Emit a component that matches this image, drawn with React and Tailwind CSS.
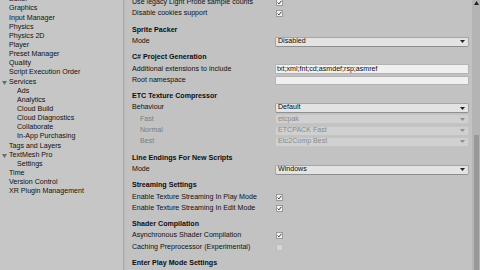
import React from 'react';

const font = { fontFamily: '"Liberation Sans", Arial, sans-serif' };

const navItems = [
  { label: 'Editor', depth: 0 },
  { label: 'Graphics', depth: 0 },
  { label: 'Input Manager', depth: 0 },
  { label: 'Physics', depth: 0 },
  { label: 'Physics 2D', depth: 0 },
  { label: 'Player', depth: 0 },
  { label: 'Preset Manager', depth: 0 },
  { label: 'Quality', depth: 0 },
  { label: 'Script Execution Order', depth: 0 },
  { label: 'Services', depth: 0, open: true },
  { label: 'Ads', depth: 1 },
  { label: 'Analytics', depth: 1 },
  { label: 'Cloud Build', depth: 1 },
  { label: 'Cloud Diagnostics', depth: 1 },
  { label: 'Collaborate', depth: 1 },
  { label: 'In-App Purchasing', depth: 1 },
  { label: 'Tags and Layers', depth: 0 },
  { label: 'TextMesh Pro', depth: 0, open: true },
  { label: 'Settings', depth: 1 },
  { label: 'Time', depth: 0 },
  { label: 'Version Control', depth: 0 },
  { label: 'XR Plugin Management', depth: 0 },
];

// settings rows: h = header, c = checkbox, d = dropdown, t = text field
const rows = [
  { type: 'c', label: 'Use legacy Light Probe sample counts', checked: true },
  { type: 'c', label: 'Disable cookies support', checked: true },
  { type: 'h', label: 'Sprite Packer' },
  { type: 'd', label: 'Mode', value: 'Disabled' },
  { type: 'h', label: 'C# Project Generation' },
  { type: 't', label: 'Additional extensions to include', value: 'txt;xml;fnt;cd;asmdef;rsp;asmref' },
  { type: 't', label: 'Root namespace', value: '' },
  { type: 'h', label: 'ETC Texture Compressor' },
  { type: 'd', label: 'Behaviour', value: 'Default' },
  { type: 'd', label: 'Fast', value: 'etcpak', disabled: true },
  { type: 'd', label: 'Normal', value: 'ETCPACK Fast', disabled: true },
  { type: 'd', label: 'Best', value: 'Etc2Comp Best', disabled: true },
  { type: 'h', label: 'Line Endings For New Scripts' },
  { type: 'd', label: 'Mode', value: 'Windows' },
  { type: 'h', label: 'Streaming Settings' },
  { type: 'c', label: 'Enable Texture Streaming In Play Mode', checked: true },
  { type: 'c', label: 'Enable Texture Streaming In Edit Mode', checked: true },
  { type: 'h', label: 'Shader Compilation' },
  { type: 'c', label: 'Asynchronous Shader Compilation', checked: true },
  { type: 'c', label: 'Caching Preprocessor (Experimental)', checked: false, disabled: true },
  { type: 'h', label: 'Enter Play Mode Settings' },
  { type: 'c', label: 'Enter Play Mode Options (Experimental)', checked: false },
];

function Arrow({ disabled }) {
  return (
    <svg width="5" height="3" viewBox="0 0 5 3" className="shrink-0">
      <path d="M0 0 H5 L2.5 3 Z" fill={disabled ? '#8e8e8e' : '#222'} />
    </svg>
  );
}

function Checkbox({ checked, disabled }) {
  return (
    <div
      className={`w-[7px] h-[7px] border flex items-center justify-center ${
        disabled ? 'bg-[#d6d6d6] border-[#bdbdbd]' : 'bg-[#f2f2f2] border-[#9a9a9a]'
      }`}
    >
      {checked && (
        <svg width="5" height="5" viewBox="0 0 5 5">
          <path d="M0.6 2.6 L1.9 3.9 L4.4 0.8" stroke="#1e1e1e" strokeWidth="0.9" fill="none" />
        </svg>
      )}
    </div>
  );
}

function Row({ row, first }) {
  if (row.type === 'h') {
    return (
      <div className="h-[11.3px] shrink-0 mt-[5px] flex items-center font-bold text-[#0d0d0d]">
        {row.label}
      </div>
    );
  }
  return (
    <div className={`h-[11.3px] shrink-0 flex items-center ${first ? 'mt-[-3px]' : ''}`}>
      <div className={`w-[143px] shrink-0 ${row.disabled && row.type === 'd' ? 'pl-2 text-[#7c7c7c]' : 'text-[#111]'}`}>
        {row.label}
      </div>
      <div className="flex-1 flex items-center">
        {row.type === 'c' && (
          <div className="pl-[1px]">
            <Checkbox checked={row.checked} disabled={row.disabled} />
          </div>
        )}
        {row.type === 'd' && (
          <div
            className={`w-full h-[10px] rounded-[2px] border flex items-center justify-between pl-[2px] pr-[3px] ${
              row.disabled
                ? 'bg-[#d0d0d0] border-[#c4c4c4] text-[#8a8a8a]'
                : 'bg-[#e3e3e3] border-[#a6a6a6] border-b-[#8f8f8f] text-[#0d0d0d]'
            }`}
          >
            <span>{row.value}</span>
            <Arrow disabled={row.disabled} />
          </div>
        )}
        {row.type === 't' && (
          <div className="w-full h-[9.5px] bg-[#f0f0f0] border border-[#b3b3b3] rounded-[1px] flex items-center pl-[1px] text-[#0d0d0d]">
            {row.value}
          </div>
        )}
      </div>
    </div>
  );
}

export default function App() {
  return (
    <div className="w-[480px] h-[270px] flex overflow-hidden bg-[#c2c2c2] text-[7.1px] leading-none" style={font}>
      {/* Tree */}
      <div className="w-[123px] shrink-0 bg-[#c6c6c6] flex flex-col">
        <div className="mt-[-4.75px] shrink-0">
          {navItems.map((item, i) => (
            <div key={i} className="h-[9.15px] flex items-center relative text-[#111]">
              {item.open && (
                <svg width="5" height="4" viewBox="0 0 5 4" className="absolute left-[2px] top-[3px]">
                  <path d="M0 0 H5 L2.5 4 Z" fill="#6a6a6a" />
                </svg>
              )}
              <span className={item.depth ? 'pl-[17px]' : 'pl-[9px]'}>{item.label}</span>
            </div>
          ))}
        </div>
      </div>
      <div className="w-[2px] shrink-0 bg-[#a9a9a9] border-r border-[#b7b7b7]" />

      {/* Settings */}
      <div className="flex-1 flex flex-col pl-[7px] pr-[3px]">
        {rows.map((row, i) => (
          <Row key={i} row={row} first={i === 0} />
        ))}
      </div>

      {/* Scrollbar */}
      <div className="w-[8px] shrink-0 bg-[#b4b4b4] flex flex-col items-center">
        <svg width="5" height="4" viewBox="0 0 5 4" className="mt-[1px] shrink-0">
          <path d="M0 4 H5 L2.5 0 Z" fill="#222" />
        </svg>
        <div className="flex-1" />
        <div className="w-[5px] h-[135px] shrink-0 bg-[#989898]" />
      </div>
    </div>
  );
}
